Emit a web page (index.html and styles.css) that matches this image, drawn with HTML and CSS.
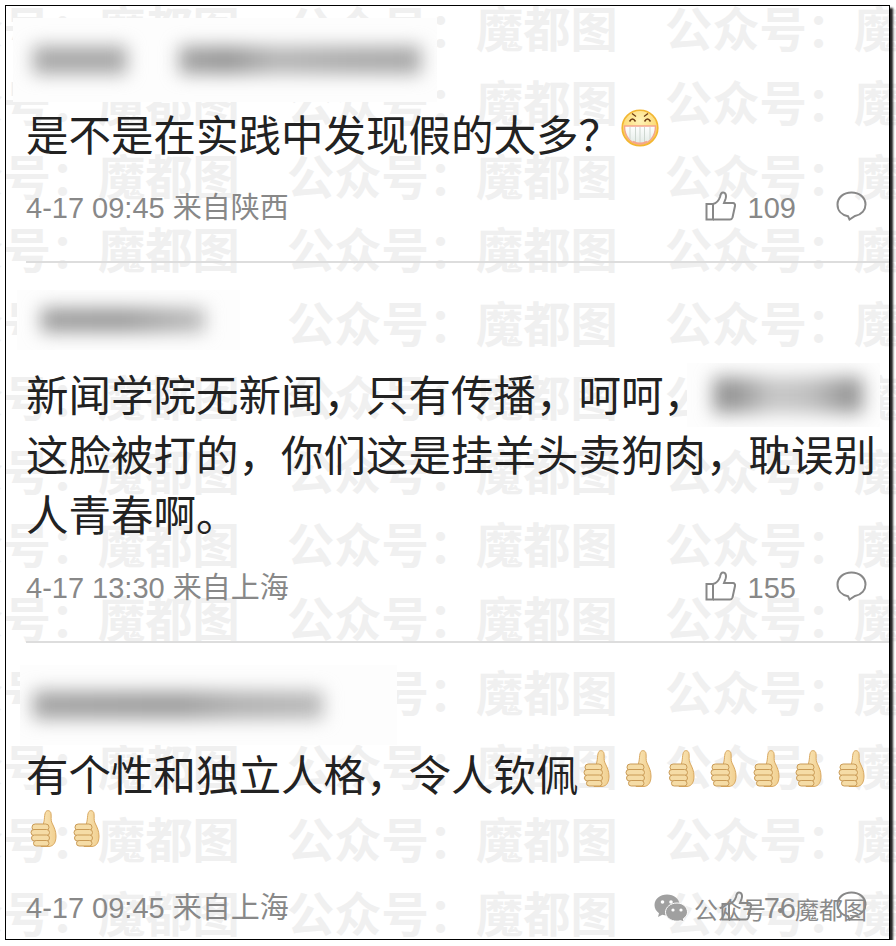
FILE: index.html
```html
<!DOCTYPE html>
<html lang="zh-CN">
<head>
  <meta charset="UTF-8" />
  <title>评论</title>
  <link rel="stylesheet" href="styles.css">
</head>
<body>
  <!-- shared icons -->
  <svg class="sprites" aria-hidden="true">
    <defs>
      <radialGradient id="faceFill" cx="50%" cy="30%" r="75%">
        <stop offset="0" stop-color="#fff3b8" />
        <stop offset="0.6" stop-color="#fddc7a" />
        <stop offset="1" stop-color="#f6b93a" />
      </radialGradient>
      <linearGradient id="toothFill" x1="0" y1="0" x2="0" y2="1">
        <stop offset="0" stop-color="#ffffff" />
        <stop offset="1" stop-color="#e2ebe6" />
      </linearGradient>
      <linearGradient id="skinFill" x1="0" y1="0" x2="1" y2="0">
        <stop offset="0" stop-color="#fae6b8" />
        <stop offset="1" stop-color="#f1cf8f" />
      </linearGradient>
    </defs>
    <symbol id="icon-like" viewBox="0 0 31 30">
      <path d="M1.5 13H8V28.5H1.5Z" />
      <path d="M8 13C12 12 14 9 15 6C15.500 3 16 1.500 18 1.500C21 1.500 21.500 5 20.500 8L19 12H28C29.500 12 30.300 13.500 30 15L27.500 26.500C27 28 26 28.500 25 28.500H8" />
    </symbol>
    <symbol id="icon-reply" viewBox="0 0 31 30">
      <path d="M12 25.200C5.500 24 1.500 19.500 1.500 13.500C1.500 6.500 7.500 1.500 15.500 1.500C23.500 1.500 29.500 6.500 29.500 13.500C29.500 19 25.500 23.500 19 25L13.500 28.500Z" />
    </symbol>
    <symbol id="emoji-grin" viewBox="0 0 38 38">
      <circle cx="19" cy="19" r="17.800" fill="url(#faceFill)" stroke="#f2b632" stroke-width="1.600" />
      <path d="M3.500 17H34.500C34.500 28 28 35 19 35C10 35 3.500 28 3.500 17Z" fill="url(#toothFill)" stroke="#f5a58c" stroke-width="1.400" />
      <path d="M9 18V30M14.500 18V33M19 18V34M23.500 18V33M29 18V30" stroke="#c9d2cc" stroke-width="0.900" fill="none" />
      <path d="M12 32.500Q19 36.500 26 32.500" stroke="#f5a58c" stroke-width="2" fill="none" />
      <path d="M8.500 12.500Q11.500 7.500 14.500 12.500M23.500 12.500Q26.500 7.500 29.500 12.500" stroke="#6b3a12" stroke-width="1.500" fill="none" />
      <path d="M11 4.500L15 7.500M27 4.500L23 7.500" stroke="#6b3a12" stroke-width="1.200" fill="none" />
    </symbol>
    <symbol id="emoji-thumb" viewBox="0 0 38 38">
      <path d="M17 16C19 11 18 5 20 2.500C21.500 .8 24.500 1.500 25 4.500C25.500 8 24.500 11 26 14C28 18 30 22 30 27C30 33 28 37 23 37.500H15V16Z" fill="url(#skinFill)" stroke="#d9a860" stroke-width="1" />
      <rect x="6" y="15" width="17" height="6.500" rx="3.200" fill="#f5dca6" stroke="#c99a55" stroke-width="1" />
      <rect x="5" y="20.500" width="18.500" height="6" rx="3" fill="#f5dca6" stroke="#c99a55" stroke-width="1" />
      <rect x="5.500" y="26" width="18" height="6" rx="3" fill="#f5dca6" stroke="#c99a55" stroke-width="1" />
      <rect x="7.500" y="31.500" width="15.500" height="5.500" rx="2.700" fill="#f5dca6" stroke="#c99a55" stroke-width="1" />
    </symbol>
  </svg>

  <!-- watermark sits behind everything -->
  <div class="watermark" aria-hidden="true">
    <div class="mark-row">公众号&#xFF1A;魔都图&#x3000;公众号&#xFF1A;魔都图&#x3000;公众号&#xFF1A;魔都图</div>
    <div class="mark-row">公众号&#xFF1A;魔都图&#x3000;公众号&#xFF1A;魔都图&#x3000;公众号&#xFF1A;魔都图</div>
    <div class="mark-row">公众号&#xFF1A;魔都图&#x3000;公众号&#xFF1A;魔都图&#x3000;公众号&#xFF1A;魔都图</div>
    <div class="mark-row">公众号&#xFF1A;魔都图&#x3000;公众号&#xFF1A;魔都图&#x3000;公众号&#xFF1A;魔都图</div>
    <div class="mark-row">公众号&#xFF1A;魔都图&#x3000;公众号&#xFF1A;魔都图&#x3000;公众号&#xFF1A;魔都图</div>
    <div class="mark-row">公众号&#xFF1A;魔都图&#x3000;公众号&#xFF1A;魔都图&#x3000;公众号&#xFF1A;魔都图</div>
    <div class="mark-row">公众号&#xFF1A;魔都图&#x3000;公众号&#xFF1A;魔都图&#x3000;公众号&#xFF1A;魔都图</div>
    <div class="mark-row">公众号&#xFF1A;魔都图&#x3000;公众号&#xFF1A;魔都图&#x3000;公众号&#xFF1A;魔都图</div>
    <div class="mark-row">公众号&#xFF1A;魔都图&#x3000;公众号&#xFF1A;魔都图&#x3000;公众号&#xFF1A;魔都图</div>
    <div class="mark-row">公众号&#xFF1A;魔都图&#x3000;公众号&#xFF1A;魔都图&#x3000;公众号&#xFF1A;魔都图</div>
    <div class="mark-row">公众号&#xFF1A;魔都图&#x3000;公众号&#xFF1A;魔都图&#x3000;公众号&#xFF1A;魔都图</div>
    <div class="mark-row">公众号&#xFF1A;魔都图&#x3000;公众号&#xFF1A;魔都图&#x3000;公众号&#xFF1A;魔都图</div>
    <div class="mark-row">公众号&#xFF1A;魔都图&#x3000;公众号&#xFF1A;魔都图&#x3000;公众号&#xFF1A;魔都图</div>
  </div>

  <div class="frame">
    <!-- Comment 1 -->
    <div class="comment">
      <div class="comment-head head-first">
        <div class="nick nick-one">
          <span class="smear smear-a"></span>
          <span class="smear smear-b"></span>
        </div>
      </div>
      <div class="comment-text">是不是在实践中发现假的太多&#xFF1F;<svg class="emoji"><use href="#emoji-grin" /></svg></div>
      <div class="comment-meta">
        <span>4-17 09:45 来自陕西</span>
        <div class="actions">
          <svg class="action-icon"><use href="#icon-like" /></svg>
          <span class="like-count">109</span>
          <svg class="action-icon reply-icon"><use href="#icon-reply" /></svg>
        </div>
      </div>
    </div>

    <!-- Comment 2 -->
    <div class="comment">
      <div class="comment-head">
        <div class="nick nick-two">
          <span class="smear smear-c"></span>
        </div>
      </div>
      <div class="comment-text">新闻学院无新闻&#xFF0C;只有传播&#xFF0C;呵呵&#xFF0C;<span class="nick nick-inline"><span class="smear smear-d"></span></span><br>这脸被打的&#xFF0C;你们这是挂羊头卖狗肉&#xFF0C;耽误别人青春啊。</div>
      <div class="comment-meta">
        <span>4-17 13:30 来自上海</span>
        <div class="actions">
          <svg class="action-icon"><use href="#icon-like" /></svg>
          <span class="like-count">155</span>
          <svg class="action-icon reply-icon"><use href="#icon-reply" /></svg>
        </div>
      </div>
    </div>

    <!-- Comment 3 -->
    <div class="comment comment-last">
      <div class="comment-head">
        <div class="nick nick-three">
          <span class="smear smear-e"></span>
        </div>
      </div>
      <div class="comment-text">有个性和独立人格&#xFF0C;令人钦佩<svg class="emoji"><use href="#emoji-thumb" /></svg><svg class="emoji"><use href="#emoji-thumb" /></svg><svg class="emoji"><use href="#emoji-thumb" /></svg><svg class="emoji"><use href="#emoji-thumb" /></svg><svg class="emoji"><use href="#emoji-thumb" /></svg><svg class="emoji"><use href="#emoji-thumb" /></svg><svg class="emoji"><use href="#emoji-thumb" /></svg><svg class="emoji"><use href="#emoji-thumb" /></svg><svg class="emoji"><use href="#emoji-thumb" /></svg></div>
      <div class="comment-meta">
        <span>4-17 09:45 来自上海</span>
        <div class="actions">
          <svg class="action-icon"><use href="#icon-like" /></svg>
          <span class="like-count">76</span>
          <svg class="action-icon reply-icon"><use href="#icon-reply" /></svg>
        </div>
      </div>
    </div>

    <!-- Account tag stamped over the corner -->
    <div class="stamp">
      <svg class="stamp-logo" viewBox="0 0 34 28">
        <path class="logo-back" d="M13 .5C6 .5 .5 5 .5 11C.5 14.500 2.300 17.300 5 19.200L4 23L8.300 20.800C9.800 21.300 11.300 21.500 13 21.500C20 21.500 25.500 16.800 25.500 11C25.500 5 20 .5 13 .5Z" />
        <circle class="logo-eye" cx="8.500" cy="8" r="1.800" />
        <circle class="logo-eye" cx="17" cy="8" r="1.800" />
        <path class="logo-front" d="M23 9C16.500 9 11.500 13.200 11.500 18.200C11.500 23.200 16.500 27.200 23 27.200C24.300 27.200 25.500 27 26.600 26.700L30.300 28L29.300 24.800C31.800 23.200 33.500 20.800 33.500 18.200C33.500 13.200 29 9 23 9Z" />
        <circle class="logo-eye" cx="19" cy="16" r="1.600" />
        <circle class="logo-eye" cx="27" cy="16" r="1.600" />
      </svg>
      <span>公众号</span>
      <span class="stamp-dot">·</span>
      <span>魔都图</span>
    </div>
  </div>
</body>
</html>
```

FILE: styles.css
```css
body {
  margin: 0;
  background: #ffffff;
  font-family: "Liberation Sans", "Noto Sans CJK SC", sans-serif;
  color: #222222;
}

.sprites {
  position: absolute;
  width: 0;
  height: 0;
}

.watermark {
  position: absolute;
  top: 0;
  left: 0;
  width: 896px;
  height: 946px;
  overflow: hidden;
  z-index: -1;
}

.mark-row {
  position: relative;
  left: -91px;
  top: -10px;
  height: 73.75px;
  line-height: 73.75px;
  font-family: "Noto Sans CJK SC", sans-serif;
  font-size: 47.25px;
  font-weight: 700;
  color: #f0f0f0;
  white-space: nowrap;
}

.frame {
  position: relative;
  width: 883px;
  height: 933px;
  margin: 5px 0 0 5px;
  border: 1px solid #000000;
  box-shadow: 3px 3px 2px #222222;
}

.comment {
  margin: 0 0 0 20px;
  border-bottom: 2px solid #dddddd;
}

.comment-last {
  border-bottom: none;
}

.comment-head {
  height: 104px;
}

.head-first {
  height: 101px;
}

.comment-text {
  font-size: 42.5px;
  line-height: 60px;
}

.comment-meta {
  display: flex;
  justify-content: space-between;
  align-items: center;
  height: 40px;
  margin-top: 21px;
  padding: 0 22px 33px 0;
  font-size: 29px;
  line-height: 40px;
  color: #888888;
}

.comment-last .comment-meta {
  padding-bottom: 0;
}

.actions {
  display: flex;
  align-items: center;
}

.action-icon {
  width: 31px;
  height: 30px;
  margin-bottom: 4px;
  fill: none;
  stroke: #888888;
  stroke-width: 2;
}

.like-count {
  margin-left: 12px;
}

.reply-icon {
  margin-left: 40px;
}

.emoji {
  width: 38px;
  height: 38px;
  margin: 2px 4.5px 0 0;
  vertical-align: top;
}

/* blurred nicknames */
.nick {
  display: flex;
  align-items: center;
  overflow: hidden;
  background: #fdfdfd;
}

.nick-one {
  width: 424px;
  height: 84px;
  margin-left: -13px;
  padding-left: 20px;
  box-sizing: border-box;
  position: relative;
  top: 12px;
  gap: 52px;
}

.nick-two {
  width: 223px;
  height: 60px;
  margin-left: -9px;
  padding-left: 24px;
  box-sizing: border-box;
  position: relative;
  top: 27px;
}

.nick-three {
  width: 377px;
  height: 80px;
  margin-left: -6px;
  padding-left: 13px;
  box-sizing: border-box;
  position: relative;
  top: 22px;
}

.nick-inline {
  display: inline-flex;
  width: 193px;
  height: 64px;
  margin: -4px 0 0 -19px;
  padding-left: 26px;
  box-sizing: border-box;
  vertical-align: top;
}

.smear {
  display: block;
  filter: blur(9px);
}

.smear-a {
  width: 94px;
  height: 28px;
  background: #a8a8a8;
}

.smear-b {
  width: 242px;
  height: 28px;
  background: linear-gradient(90deg, #a4a4a4, #969696 20%, #b6b6b6 40%, #acacac 70%, #a8a8a8);
}

.smear-c {
  width: 164px;
  height: 24px;
  background: linear-gradient(90deg, #9c9c9c, #989898 50%, #bcbcbc);
}

.smear-d {
  width: 150px;
  height: 36px;
  background: linear-gradient(90deg, #979797 15%, #c8c8c8 40%, #c0c0c0 65%, #989898 90%);
}

.smear-e {
  width: 290px;
  height: 28px;
  background: linear-gradient(90deg, #a4a4a4, #9e9e9e 50%, #b0b0b0 70%, #b8b8b8);
}

/* account tag */
.stamp {
  position: absolute;
  left: 648px;
  top: 885px;
  display: flex;
  align-items: center;
  height: 34px;
  font-family: "Noto Sans CJK SC", sans-serif;
  font-size: 24px;
  color: #8a8a8a;
}

.stamp-logo {
  width: 34px;
  height: 28px;
  margin-right: 6px;
}

.logo-back {
  fill: #a0a0a0;
}

.logo-front {
  fill: #a0a0a0;
  stroke: #ffffff;
  stroke-width: 1;
}

.logo-eye {
  fill: #ffffff;
}

.stamp-dot {
  width: 29px;
  text-align: center;
}
```
